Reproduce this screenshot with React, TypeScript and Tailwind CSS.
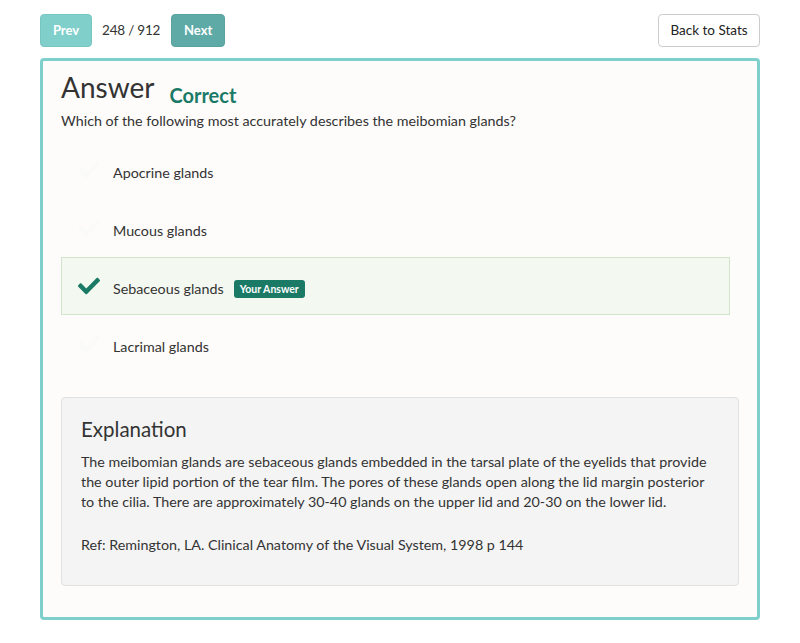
import React from "react";

const Check = ({ className }: { className?: string }) => (
  <svg viewBox="0 0 512 512" className={className} fill="currentColor">
    <path d="M173.9 439.4l-166.4-166.4c-10-10-10-26.2 0-36.2l36.2-36.2c10-10 26.2-10 36.2 0L192 312.7 432.1 72.6c10-10 26.2-10 36.2 0l36.2 36.2c10 10 10 26.2 0 36.2l-294.4 294.4c-10 10-26.2 10-36.2 0z" />
  </svg>
);

const options = [
  { text: "Apocrine glands", selected: false },
  { text: "Mucous glands", selected: false },
  { text: "Sebaceous glands", selected: true },
  { text: "Lacrimal glands", selected: false },
];

export default function App() {
  return (
    <div
      className="w-[800px] h-[643px] bg-white text-[#333]"
      style={{ fontFamily: "Lato, 'Open Sans', sans-serif" }}
    >
      <div className="px-[40px] pt-[14px]">
        <div className="flex items-center justify-between h-[33px]">
          <div className="flex items-center">
            <button className="h-[33px] w-[52px] rounded-[4px] bg-[#80cfcb] border border-[#78c6c2] text-white font-bold text-[13px]">
              Prev
            </button>
            <span className="ml-[10px] mr-[11px] text-[13.5px] tracking-[-0.2px] text-[#333]">248 / 912</span>
            <button className="h-[33px] w-[54px] rounded-[4px] bg-[#5eaaa6] border border-[#59a29e] text-white font-bold text-[13px]">
              Next
            </button>
          </div>
          <button className="h-[33px] w-[102px] rounded-[4px] bg-white border border-[#cccccc] text-[13.5px] text-[#222]">
            Back to Stats
          </button>
        </div>

        <div className="mt-[11px] h-[562px] border-[3px] border-[#7fd0cd] rounded-[4px] bg-[#fdfcfa] px-[18px] pt-[8px]">
          <div className="flex items-end">
            <h1 className="text-[28px] leading-[36px] text-[#333]">Answer</h1>
            <span className="ml-[15px] text-[20px] leading-[30px] font-bold text-[#1b7a67] mb-[-5px]">Correct</span>
          </div>
          <p className="mt-[6px] text-[14.3px] leading-[20px] text-[#333]">
            Which of the following most accurately describes the meibomian glands?
          </p>
          <div className="mt-[10px] w-[669px]">
            {options.map((o) => (
              <div
                key={o.text}
                className={
                  "h-[58px] flex items-center border " +
                  (o.selected ? "bg-[#f3f9f1] border-[#cfe4cb]" : "border-transparent")
                }
              >
                <Check
                  className={
                    "ml-[16px] w-[22px] h-[22px] " + (o.selected ? "text-[#1a7a66]" : "text-[#fafaf8]")
                  }
                />
                <span className="ml-[13px] mt-[6px] text-[14.3px] text-[#333]">{o.text}</span>
                {o.selected && (
                  <span className="ml-[10px] mt-[6px] h-[18px] px-[6px] rounded-[3px] bg-[#1a7a66] text-white text-[10.5px] font-bold leading-[18px]">
                    Your Answer
                  </span>
                )}
              </div>
            ))}
          </div>

          <div className="mt-[24px] h-[189px] bg-[#f4f4f4] border border-[#e1e1e1] rounded-[4px] px-[19px] pt-[16px]">
            <h2 className="text-[20.5px] leading-[30px] text-[#333]">Explanation</h2>
            <p className="mt-[8px] text-[14.3px] leading-[20px] text-[#333]">
              The meibomian glands are sebaceous glands embedded in the tarsal plate of the eyelids that provide the outer lipid portion of the tear film. The pores of these glands open along the lid margin posterior to the cilia. There are approximately 30-40 glands on the upper lid and 20-30 on the lower lid.
            </p>
            <p className="mt-[23px] text-[14.3px] leading-[20px] text-[#333]">
              Ref: Remington, LA. Clinical Anatomy of the Visual System, 1998 p 144
            </p>
          </div>
        </div>
      </div>
    </div>
  );
}
